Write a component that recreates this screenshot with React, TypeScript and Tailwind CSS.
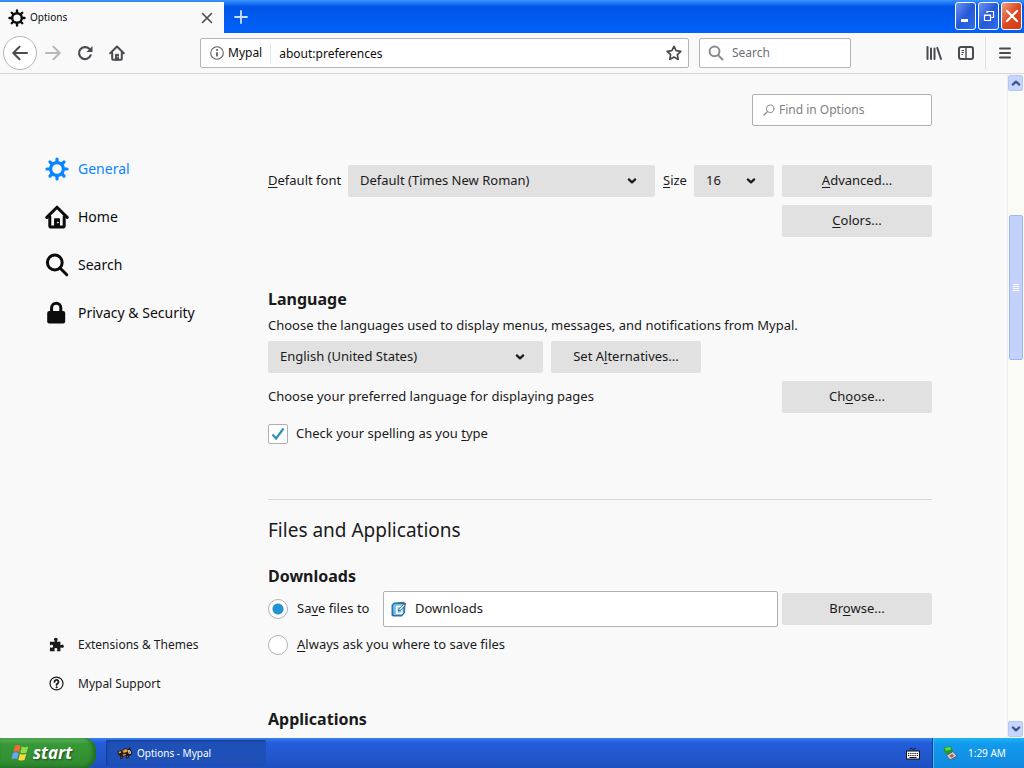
import React, { useState } from 'react';

const FONT = 'font-["Noto_Sans","Open_Sans",sans-serif]';

interface IconProps {
  className?: string;
}

function GearIcon({ className = '' }: IconProps) {
  return (
    <svg viewBox="0 0 24 24" className={className} fill="none" stroke="currentColor" strokeLinecap="round">
      <circle cx="12" cy="12" r="6.4" strokeWidth="3.2" />
      <path
        strokeWidth="3.2"
        d="M12 2v3M12 19v3M2 12h3M19 12h3M5 5l2 2M17 17l2 2M5 19l2-2M17 7l2-2"
      />
    </svg>
  );
}

function HomeIcon({ className = '' }: IconProps) {
  return (
    <svg viewBox="0 0 24 24" className={className} fill="none" stroke="currentColor" strokeWidth="3" strokeLinecap="round" strokeLinejoin="round">
      <path d="M1.8 12.4L12 2.2l10.2 10.2" />
      <path d="M4.8 11.5v9.2c0 .8.6 1.3 1.3 1.3h11.8c.7 0 1.3-.5 1.3-1.3v-9.2" />
      <path d="M9.8 22v-8h4.400V22z" fill="currentColor" strokeWidth="1.500" />
      <circle cx="12.800" cy="17.600" r="0.500" stroke="#fff" strokeWidth="0.800" />
    </svg>
  );
}

function MagnifierIcon({ className = '' }: IconProps) {
  return (
    <svg viewBox="0 0 24 24" className={className} fill="none" stroke="currentColor" strokeWidth="3" strokeLinecap="round">
      <circle cx="9.8" cy="9.5" r="7.4" />
      <path d="M15.200 15.200l6.600 6.600" />
    </svg>
  );
}

function LockIcon({ className = '' }: IconProps) {
  return (
    <svg viewBox="0 0 24 24" className={className}>
      <path d="M6.600 11V6.900a4.600 4.600 0 0 1 9.200 0V11" fill="none" stroke="currentColor" strokeWidth="3" />
      <rect x="2.200" y="10" width="18" height="12.500" rx="2" fill="currentColor" />
    </svg>
  );
}

function PuzzleIcon({ className = '' }: IconProps) {
  return (
    <svg viewBox="0 0 16 16" className={className} fill="currentColor">
      <path d="M1 5h4.6c.5 0 .7-.4.5-.8C5.800 3.800 5.300 3.300 5.300 2.600 5.300 1.600 6.200.8 7.300.8s2 .8 2 1.800c0 .7-.5 1.200-.8 1.600-.2.4 0 .8.5.8H12.200v3.100c0 .5.4.7.8.5.3-.2.7-.5 1.200-.5.9 0 1.600.8 1.600 1.800s-.7 1.800-1.600 1.800c-.5 0-.9-.3-1.200-.5-.4-.2-.8 0-.8.500V15.200H8.900c-.5 0-.7-.4-.5-.8.200-.3.500-.7.500-1.200 0-.9-.7-1.500-1.600-1.500s-1.600.6-1.600 1.500c0 .5.300.9.500 1.200.2.400 0 .8-.5.8H1v-3.600c0-.5.400-.7.800-.5.300.2.600.4 1.100.4.900 0 1.500-.7 1.500-1.600S3.800 8.300 2.900 8.300c-.5 0-.8.2-1.100.4-.4.200-.8 0-.8-.5z" />
    </svg>
  );
}

function HelpIcon({ className = '' }: IconProps) {
  return (
    <svg viewBox="0 0 16 16" className={className} fill="none" stroke="currentColor" strokeLinecap="round">
      <circle cx="8" cy="8" r="6.9" strokeWidth="1.3" />
      <path d="M5.900 6.300a2.100 2.100 0 1 1 3.300 1.600C8.400 8.400 8 8.700 8 9.500" strokeWidth="1.900" />
      <circle cx="8" cy="12" r="0.6" fill="currentColor" />
    </svg>
  );
}

function ChevronIcon({ className = '' }: IconProps) {
  return (
    <svg viewBox="0 0 10 8" className={className} fill="none" stroke="currentColor" strokeWidth="2.2" strokeLinecap="round" strokeLinejoin="round">
      <path d="M1.800 2.400L5 5.400l3.200-3" />
    </svg>
  );
}

function WindowsFlag() {
  return (
    <svg viewBox="0 1 16.5 16.5" className="h-[18px] w-[18px]">
      <path d="M3.600 2.600C5.400 1.600 7 1.700 8.800 2.700L7.400 8.300C5.700 7.300 4 7.300 2.200 8.200z" fill="#f26a3a" />
      <path d="M9.900 3.200c1.900 1 3.700 1 5.900 0l-1.500 5.600c-2 1-3.900.9-5.800-.1z" fill="#8fdc4a" />
      <path d="M1.900 9.300c1.800-.9 3.500-.8 5.200.1l-1.500 5.500C4 14 2.300 14 .5 14.900z" fill="#6ba2ff" />
      <path d="M8.200 9.900c1.900 1 3.800 1 5.800.1l-1.500 5.500c-2 1-3.900.9-5.800-.1z" fill="#ffd83e" />
    </svg>
  );
}

function MypalIcon() {
  return (
    <svg viewBox="0 0 16 16" className="h-4 w-4">
      <path d="M0.500 6.500l3-1.500 1.500 1 3-3 3 1 2-2 .5 2.500L15 7l-.5 3-2.500 1-.5 2.500H9.500L9 11l-3 .5L5 14H3l.5-3L1 9.500z" fill="#241812" />
      <path d="M5.500 6l3-2 2 .8-.5 2.200-3.500 1z" fill="#f0a030" />
      <path d="M10.500 5.500l2-.5 1.500 2-.5 2-2-.5z" fill="#f8e2b8" />
      <path d="M11.800 6.500l1 .2-.2 1-.9-.2z" fill="#111" />
      <path d="M1.500 7l2-.9.800 1.400-2.300.9zM5.500 9.500l3-.8.500 1.300-3 .7zM4 12l1-.5-.5 1.500zM10 11.500l1-.4-.3 1.500z" fill="#dca45a" />
    </svg>
  );
}

function FolderIcon() {
  return (
    <svg viewBox="0 0 16 16" className="h-4 w-4 shrink-0">
      <path d="M0.500 4L3 1.500 13 .8l1.500 2-.5 9-3 3.700H2l-1.500-1z" fill="#2874a8" />
      <path d="M2 4.500L4 3h8.500v8.500L10.500 14H2.500z" fill="#79bfe8" />
      <path d="M5 4.800h6l-1 1.500H6.500V11.500H10V9.500L11.500 8v5H5z" fill="#fff" />
      <path d="M7.300 10l.7-2.200 4.700-4.600 1.500 1.400-4.700 4.600z" fill="#e9f5ff" stroke="#1a4f86" strokeWidth="0.8" />
      <path d="M13 2.500l1-.8 1.400 1.400-.9.900z" fill="#c0392b" />
    </svg>
  );
}

function KeyboardIcon() {
  return (
    <svg viewBox="0 0 14 14" className="h-3.5 w-3.5">
      <path d="M4 3.500c0-2 2-.5 2.500-1.500M7 4c0-2 2.500-.5 3-2" stroke="#0a1838" fill="none" />
      <rect x="0.500" y="5" width="13" height="8" fill="#f5f5f5" stroke="#111" />
      <path d="M2 7.500h10M2 9.500h10" stroke="#111" strokeWidth="1.200" strokeDasharray="1.200 1" />
      <path d="M3.500 11.500h7" stroke="#111" />
    </svg>
  );
}

function TrayIcon() {
  return (
    <svg viewBox="0 0 16 16" className="h-4 w-4">
      <path d="M1.500 2.500L8.500 1l2.500 4.500L6 10.500 2.500 7z" fill="#1f9a2c" />
      <path d="M2.500 3l5.500-1 1.200 2.500-4.700 1.300z" fill="#5fdc52" />
      <path d="M4.500 10.500l6.500-4 4 4.500-7 4z" fill="#c9cdd2" stroke="#4b525a" strokeWidth="0.800" />
      <path d="M7.500 10.800l2.700-1.800 1.800 1.900-2.800 1.700z" fill="#b5524e" />
    </svg>
  );
}

interface SelectBoxProps {
  id: string;
  options: string[];
  className?: string;
}

function SelectBox({ id, options, className = '' }: SelectBoxProps) {
  return (
    <div className={`relative h-8 ${className}`}>
      <select id={id} className="h-8 w-full appearance-none rounded-xs bg-[#e1e1e1] pl-3 pr-8 text-[#1a1a1a] outline-none">
        {options.map((o) => (
          <option key={o}>{o}</option>
        ))}
      </select>
      <ChevronIcon className="pointer-events-none absolute right-[18px] top-3 h-2 w-2.5" />
    </div>
  );
}

function PrefButton({ children }: { children: React.ReactNode }) {
  return (
    <button type="button" className="h-8 w-[150px] shrink-0 rounded-xs bg-[#e1e1e1] hover:bg-[#d4d4d4]">
      {children}
    </button>
  );
}

function Key({ children }: { children: React.ReactNode }) {
  return <span className="underline underline-offset-2">{children}</span>;
}

function TitleBar() {
  const control = 'flex h-7 w-[21px] items-center justify-center rounded-[3px] border border-white text-white';
  return (
    <header className="flex h-[33px] bg-linear-to-b from-[#3a94ff] via-[#0054e6] via-20% to-[#0062fb]">
      <div className="mt-0.5 flex w-56 items-center bg-[#f9f9fa] pl-2 pr-[11px] text-[#0c0c0d]">
        <GearIcon className="h-[18px] w-[18px]" />
        <span className="ml-1 flex-1 text-[10px]">Options</span>
        <button type="button" aria-label="Close tab">
          <svg viewBox="0 0 12 12" className="h-3 w-3" stroke="#4a4a4f" strokeWidth="1.600" strokeLinecap="round">
            <path d="M1.500 1.500l9 9M10.500 1.500l-9 9" />
          </svg>
        </button>
      </div>
      <button type="button" aria-label="New tab" className="px-2.5">
        <svg viewBox="0 0 14 14" className="h-3.5 w-3.5" stroke="#cfe0ff" strokeWidth="1.800" strokeLinecap="round">
          <path d="M7 1v12M1 7h12" />
        </svg>
      </button>
      <div className="ml-auto flex gap-0.5 pr-0.5 pt-0.5">
        <button type="button" aria-label="Minimize" className={`${control} bg-linear-to-br from-[#6d93f0] via-[#2558d8] to-[#2f6bf0]`}>
          <svg viewBox="0 0 14 14" className="h-3.5 w-3.5">
            <path d="M2 10h7v3H2z" fill="currentColor" />
          </svg>
        </button>
        <button type="button" aria-label="Restore" className={`${control} bg-linear-to-br from-[#6d93f0] via-[#2558d8] to-[#2f6bf0]`}>
          <svg viewBox="0 0 14 14" className="h-3.5 w-3.5" fill="none" stroke="currentColor">
            <path d="M5 4V2.500h6.500v6H9.500M5 2.500h6.500M2.500 6h6v5.500h-6zM2.500 6.500h6" strokeWidth="1.200" />
          </svg>
        </button>
        <button type="button" aria-label="Close" className={`${control} bg-linear-to-br from-[#f09a80] via-[#dc4a22] to-[#d13c12]`}>
          <svg viewBox="0 0 14 14" className="h-3.5 w-3.5 shrink-0" stroke="currentColor" strokeWidth="2.200" strokeLinecap="round">
            <path d="M2 2l10 10M12 2L2 12" />
          </svg>
        </button>
      </div>
    </header>
  );
}

function Toolbar() {
  return (
    <nav className="flex h-[41px] items-center border-b border-[#d7d7db] bg-[#f9f9fa] pl-[3px] pr-3 text-xs text-[#4a4a4f]">
      <button type="button" aria-label="Back" className="flex h-[34px] w-[34px] items-center justify-center rounded-full border border-[#b5b5b8] bg-white">
        <svg viewBox="0 0 16 16" className="h-4 w-4" fill="none" stroke="currentColor" strokeWidth="2" strokeLinecap="round" strokeLinejoin="round">
          <path d="M15 8H1.500M7.500 1.800L1.300 8l6.200 6.200" />
        </svg>
      </button>
      <button type="button" aria-label="Forward" className="ml-2 text-[#b9b9bb]">
        <svg viewBox="0 0 16 16" className="h-4 w-4" fill="none" stroke="currentColor" strokeWidth="2" strokeLinecap="round" strokeLinejoin="round">
          <path d="M1 8h13.500M8.500 1.800L14.700 8l-6.200 6.200" />
        </svg>
      </button>
      <button type="button" aria-label="Reload" className="ml-4">
        <svg viewBox="0 0 16 16" className="h-4 w-4" fill="none" stroke="currentColor" strokeWidth="2.200" strokeLinecap="round">
          <path d="M13.600 10.300A6 6 0 1 1 12.300 3.800" />
          <path d="M15.500 1v6h-6z" fill="currentColor" stroke="none" />
        </svg>
      </button>
      <button type="button" aria-label="Home" className="ml-4">
        <HomeIcon className="h-4 w-4" />
      </button>

      <div className="ml-[75px] flex h-[30px] flex-1 items-center rounded-xs border border-[#b5b5b8] bg-white pl-[9px] pr-1.5 text-[#0c0c0d]">
        <svg viewBox="0 0 16 16" className="h-3.5 w-3.5" fill="none" stroke="#5a5a5e">
          <circle cx="8" cy="8" r="7.200" strokeWidth="1.200" />
          <path d="M8 7v5" strokeWidth="2" />
          <circle cx="8" cy="4.500" r="0.700" fill="#5a5a5e" />
        </svg>
        <span className="ml-1">Mypal</span>
        <input
          aria-label="Address"
          defaultValue="about:preferences"
          className="ml-2 h-5 min-w-0 flex-1 border-l border-[#e4e4e6] pl-2 outline-none"
        />
        <button type="button" aria-label="Bookmark this page" className="text-[#4a4a4f]">
          <svg viewBox="0 0 16 16" className="h-4 w-4" fill="none" stroke="currentColor" strokeWidth="1.700" strokeLinejoin="round">
            <path d="M8 1.300l2.100 4.300 4.700.7-3.400 3.300.8 4.800L8 12.100l-4.200 2.300.8-4.800L1.200 6.300l4.700-.7z" />
          </svg>
        </button>
      </div>
      <label className="ml-2.5 flex h-[30px] w-[152px] items-center rounded-xs border border-[#b5b5b8] bg-white pl-2">
        <MagnifierIcon className="h-4 w-4 shrink-0 text-[#8a8a8c]" />
        <input aria-label="Search the web" placeholder="Search" className="ml-2 w-full min-w-0 outline-none placeholder:text-[#6f6f73]" />
      </label>

      <button type="button" aria-label="Library" className="ml-[75px]">
        <svg viewBox="0 0 16 16" className="h-4 w-4" fill="none" stroke="currentColor" strokeWidth="2" strokeLinecap="round">
          <path d="M1.500 2v12M5 3.500V14M8.500 3.500V14M11.300 3l3.700 11" />
        </svg>
      </button>
      <button type="button" aria-label="Sidebars" className="ml-4">
        <svg viewBox="0 0 16 16" className="h-4 w-4" fill="none" stroke="currentColor">
          <rect x="1" y="2" width="14" height="12" rx="2" strokeWidth="2" />
          <path d="M8 2v12" strokeWidth="1.400" />
          <path d="M3.500 5.500H6M3.500 7.500H6M3.500 9.500h1.500" />
        </svg>
      </button>
      <div className="ml-[11px] h-8 w-px bg-[#e1e1e4]" />
      <button type="button" aria-label="Menu" className="ml-3">
        <svg viewBox="0 0 14 14" className="h-3.5 w-3.5" stroke="currentColor" strokeWidth="2" strokeLinecap="round">
          <path d="M2 2.500h10M2 7h10M2 11.500h10" />
        </svg>
      </button>
    </nav>
  );
}

const categories = [
  { name: 'General', Icon: GearIcon },
  { name: 'Home', Icon: HomeIcon },
  { name: 'Search', Icon: MagnifierIcon },
  { name: 'Privacy & Security', Icon: LockIcon },
];

const helpLinks = [
  { name: 'Extensions & Themes', Icon: PuzzleIcon },
  { name: 'Mypal Support', Icon: HelpIcon },
];

function Sidebar() {
  const [selected, setSelected] = useState('General');

  return (
    <aside className="flex w-[268px] shrink-0 flex-col pb-[35px] pl-[45px] pt-[71px] text-sm">
      {categories.map(({ name, Icon }) => (
        <button
          key={name}
          type="button"
          onClick={() => setSelected(name)}
          className={`flex h-12 items-center gap-[9px] text-left ${selected === name ? 'text-[#0a84ff]' : 'text-[#0c0c0d]'}`}
        >
          <Icon className="h-6 w-6" />
          {name}
        </button>
      ))}
      <div className="mt-auto text-xs">
        {helpLinks.map(({ name, Icon }) => (
          <a key={name} href="#" className="flex h-[39px] items-center gap-3.5 pl-1">
            <Icon className="h-[15px] w-[15px]" />
            {name}
          </a>
        ))}
      </div>
    </aside>
  );
}

function Preferences() {
  const [spelling, setSpelling] = useState(true);
  const [saveMode, setSaveMode] = useState('folder');
  const radio =
    'h-5 w-5 shrink-0 appearance-none rounded-full border border-[#b1b1b1] bg-white checked:bg-[radial-gradient(circle,#2292d0_0_5px,#fff_6px)]';

  return (
    <main className="w-[664px] pt-5">
      <label className="ml-auto flex h-8 w-[180px] items-center rounded-xs border border-[#b1b1b1] bg-white px-2.5 text-xs">
        <svg viewBox="0 0 12 12" className="h-3 w-3 shrink-0" fill="none" stroke="#8a8a8c" strokeLinecap="round">
          <circle cx="7.200" cy="4.800" r="3.800" />
          <path d="M4.400 7.600L1 11" strokeWidth="1.300" />
        </svg>
        <input aria-label="Find in Options" placeholder="Find in Options" className="ml-1 w-full min-w-0 outline-none placeholder:text-[#808084]" />
      </label>

      <div className="mt-[39px] flex items-center gap-2">
        <label htmlFor="font" className="w-[72px] shrink-0 whitespace-nowrap">
          <Key>D</Key>efault font
        </label>
        <SelectBox id="font" options={['Default (Times New Roman)', 'Arial', 'Tahoma']} className="flex-1" />
        <label htmlFor="size" className="w-[23px] shrink-0">
          <Key>S</Key>ize
        </label>
        <SelectBox id="size" options={['16', '18', '20']} className="w-20" />
        <PrefButton>
          <Key>A</Key>dvanced...
        </PrefButton>
      </div>
      <div className="mt-2 flex justify-end">
        <PrefButton>
          <Key>C</Key>olors...
        </PrefButton>
      </div>

      <h2 className="mt-[50px] text-base font-bold leading-6">Language</h2>
      <p className="mt-1 leading-5">
        <label htmlFor="language">Choose the languages used to display menus, messages, and notifications from Mypal.</label>
      </p>
      <div className="mt-1.5 flex gap-2">
        <SelectBox id="language" options={['English (United States)']} className="w-[275px]" />
        <PrefButton>
          Set A<Key>l</Key>ternatives...
        </PrefButton>
      </div>
      <div className="mt-2 flex items-center justify-between">
        <p>Choose your preferred language for displaying pages</p>
        <PrefButton>
          Ch<Key>o</Key>ose...
        </PrefButton>
      </div>
      <label className="mt-[11px] flex h-5 items-center gap-2">
        <span className="relative h-5 w-5">
          <input
            type="checkbox"
            checked={spelling}
            onChange={(e) => setSpelling(e.target.checked)}
            className="block h-5 w-5 appearance-none rounded-xs border border-[#b1b1b1] bg-white"
          />
          {spelling && (
            <svg viewBox="0 0 20 20" className="pointer-events-none absolute inset-0" fill="none" stroke="#2a92b8" strokeWidth="2.200">
              <path d="M4.500 10.500l3.600 4L15.500 4.500" />
            </svg>
          )}
        </span>
        <span>
          Check your spelling as you <Key>t</Key>ype
        </span>
      </label>

      <hr className="mt-[55px] border-[#d7d7db]" />
      <h1 className="mt-[15px] text-[19px] leading-[30px]">Files and Applications</h1>

      <h2 className="mt-[19px] text-base font-bold leading-6">Downloads</h2>
      <div className="mt-[3px] flex items-center gap-1">
        <label className="flex w-[111px] shrink-0 items-center gap-[9px] whitespace-nowrap">
          <input type="radio" name="save" className={radio} checked={saveMode === 'folder'} onChange={() => setSaveMode('folder')} />
          <span>
            Sa<Key>v</Key>e files to
          </span>
        </label>
        <div className="flex h-9 flex-1 items-center rounded-xs border border-[#b1b1b1] bg-white pl-[7px]">
          <FolderIcon />
          <input aria-label="Download folder" readOnly value="Downloads" className="ml-2 min-w-0 flex-1 outline-none" />
        </div>
        <PrefButton>
          Br<Key>o</Key>wse...
        </PrefButton>
      </div>
      <label className="mt-2 flex h-5 items-center gap-[9px]">
        <input type="radio" name="save" className={radio} checked={saveMode === 'ask'} onChange={() => setSaveMode('ask')} />
        <span>
          <Key>A</Key>lways ask you where to save files
        </span>
      </label>

      <h2 className="mt-[52px] text-base font-bold leading-6">Applications</h2>
    </main>
  );
}

function ScrollBar() {
  const arrow = 'flex h-4 w-[15px] items-center justify-center rounded-xs border border-[#b4c8f6] bg-[#c6d5fd] text-[#3f5486]';
  return (
    <div className="ml-auto flex w-[17px] shrink-0 flex-col items-center border-l border-[#eeeeea] bg-[#fbfbf5] py-px pr-px">
      <button type="button" aria-label="Scroll up" className={arrow}>
        <ChevronIcon className="h-2 w-2.5 rotate-180" />
      </button>
      <div className="grow-[124] basis-0" />
      <div className="flex w-3.5 grow-[144] basis-0 flex-col items-center justify-center gap-px rounded-xs border border-[#9db8ee] bg-[#c2d2fd]">
        <span className="h-px w-1.5 bg-white" />
        <span className="h-px w-1.5 bg-white" />
        <span className="h-px w-1.5 bg-white" />
        <span className="h-px w-1.5 bg-white" />
      </div>
      <div className="grow-[362] basis-0" />
      <button type="button" aria-label="Scroll down" className={arrow}>
        <ChevronIcon className="h-2 w-2.5" />
      </button>
    </div>
  );
}

function Taskbar() {
  return (
    <footer className="flex h-[30px] shrink-0 bg-linear-to-b from-[#3a80f0] via-[#245edb] via-15% to-[#1f50c0] text-[10px] text-white">
      <button
        type="button"
        className="flex w-24 items-center gap-1 rounded-r-xl bg-linear-to-b from-[#5eb35e] via-[#379937] via-20% to-[#2f8a2f] pl-[11px] shadow-[inset_-3px_-1px_4px_#1f6b22]"
      >
        <WindowsFlag />
        <span className='font-["Open_Sans",sans-serif] text-[17px] font-bold italic leading-6 [text-shadow:1px_1px_2px_#1c4a1c]'>start</span>
      </button>
      <button type="button" className="my-0.5 ml-2.5 flex w-40 items-center gap-1 rounded-xs bg-[#1e50b8] pl-[11px] shadow-[inset_1px_1px_2px_#133a8c]">
        <MypalIcon />
        Options - Mypal
      </button>
      <div className="ml-auto flex items-center pr-3">
        <KeyboardIcon />
      </div>
      <div className="flex w-[92px] items-center gap-2.5 border-l border-[#0b3c9c] bg-linear-to-b from-[#1cb4f5] via-[#129aec] via-20% to-[#1189e0] pl-[9px] shadow-[inset_1px_0_0_#3cc0f8]">
        <TrayIcon />
        <time>1:29 AM</time>
      </div>
    </footer>
  );
}

export default function App() {
  return (
    <div className={`flex h-screen flex-col overflow-hidden bg-[#f9f9fa] text-[13px] text-[#1a1a1a] ${FONT}`}>
      <TitleBar />
      <Toolbar />
      <div className="flex min-h-0 flex-1 overflow-hidden">
        <Sidebar />
        <Preferences />
        <ScrollBar />
      </div>
      <Taskbar />
    </div>
  );
}
